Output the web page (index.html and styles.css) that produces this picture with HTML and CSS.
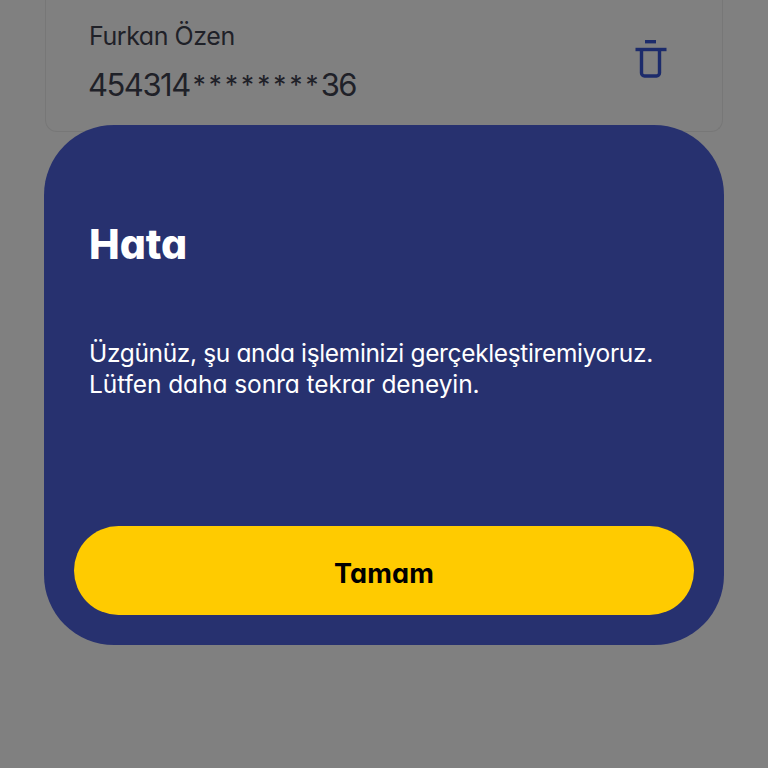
FILE: index.html
```html
<!DOCTYPE html>
<html lang="tr">
<head>
<meta charset="utf-8">
<title>Hata</title>
<link rel="stylesheet" href="styles.css">
</head>
<body>
<div class="screen">
  <section class="card">
    <div class="card-info">
      <div class="card-name">Furkan Özen</div>
      <div class="card-number">454314<span class="card-stars">********</span>36</div>
    </div>
    <svg class="trash" viewBox="0 0 32 38" width="32" height="38" fill="none" stroke="#1c2b6b" stroke-width="3.4">
      <path d="M10 1.7h11"/>
      <path d="M0.5 9.5h31"/>
      <path d="M6.5 9.5v23.5a3 3 0 0 0 3 3h12a3 3 0 0 0 3-3V9.5"/>
    </svg>
  </section>
  <section class="dialog">
    <h1 class="dialog-title">Hata</h1>
    <p class="dialog-text">Üzgünüz, şu anda işleminizi gerçekleştiremiyoruz.<br><span class="dialog-text-wide">Lütfen daha sonra tekrar deneyin.</span></p>
    <button class="dialog-button"><span class="dialog-button-label">Tamam</span></button>
  </section>
</div>
</body>
</html>
```
FILE: styles.css
```css
* { box-sizing: border-box; }
html, body { margin: 0; padding: 0; }
body { background: #808080; font-family: "Inter", "Lato", sans-serif; font-feature-settings: "cv11" 1; }
.screen { width: 768px; height: 768px; overflow: hidden; display: flex; flex-direction: column; align-items: center; }
.card {
  width: 678px; height: 133px; margin-top: -1px; flex: none;
  border: 1px solid #777; border-top: 0; border-radius: 0 0 12px 12px;
  padding: 21px 55px 0 43px; display: flex; justify-content: space-between; align-items: flex-start;
}
.card-name { font-size: 25px; line-height: 32px; color: #1f2128; letter-spacing: -0.45px; }
.card-number { font-size: 31px; line-height: 40px; margin-top: 13px; color: #1f2128; letter-spacing: -1.5px; margin-left: -1px; }
.card-stars { font-size: 26px; letter-spacing: 3.1px; margin: 0 -1px 0 3px; vertical-align: 2px; }
.trash { margin-top: 20px; }
.dialog {
  width: 680px; height: 520px; margin-top: -7px; flex: none; position: relative;
  background: #27316f; border-radius: 70px; padding: 94px 30px 30px;
  display: flex; flex-direction: column;
}
.dialog-title { margin: 0 0 0 15px; font-size: 41px; line-height: 50px; font-weight: 800; color: #fff; }
.dialog-text { margin: 69px 0 0 15px; font-size: 24.5px; line-height: 31px; color: #fff; letter-spacing: -0.35px; }
.dialog-text-wide { letter-spacing: -0.08px; }
.dialog-button {
  margin-top: auto; height: 89px; width: 100%; border: 0; border-radius: 45px; padding: 5px 0 0;
  background: #ffcb00; color: #000; font: 700 27px "Inter", sans-serif; font-feature-settings: "cv11" 1;
}
.dialog-button-label { letter-spacing: 0.2px; }
```
